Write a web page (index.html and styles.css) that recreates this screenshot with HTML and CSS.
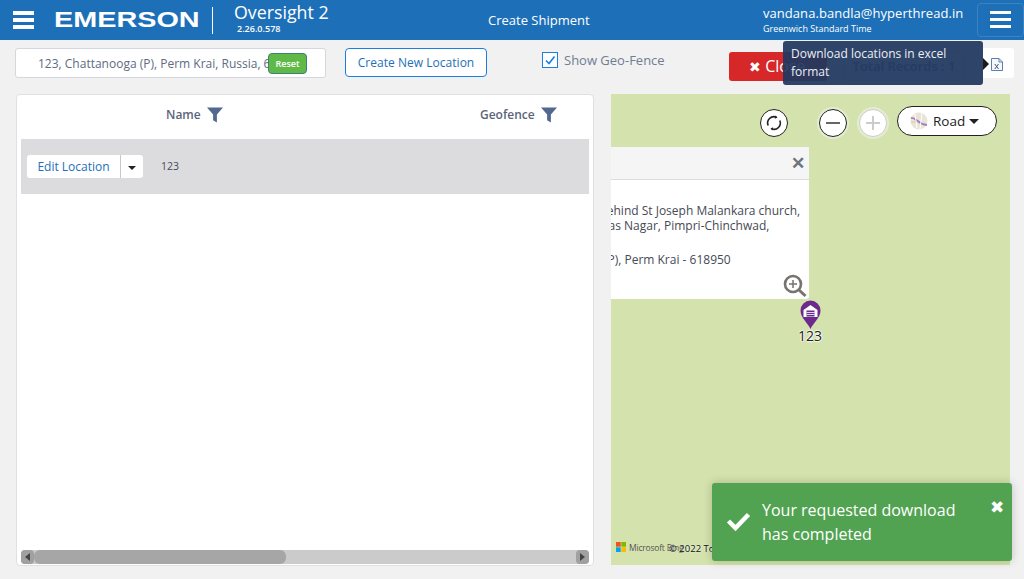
FILE: index.html
```html
<!DOCTYPE html>
<html lang="en">
<head>
<meta charset="utf-8">
<title>Oversight 2</title>
<link rel="stylesheet" href="styles.css">
</head>
<body>
<header class="topbar">
  <div class="burger burger-main"><span></span><span></span><span></span></div>
  <div class="logo"><span class="logo-word">EMERSON</span></div>
  <div class="brand">
    <div class="brand-name">Oversight 2</div>
    <div class="brand-version">2.26.0.578</div>
  </div>
  <div class="nav-link">Create Shipment</div>
  <div class="user">
    <div class="user-mail">vandana.bandla@hyperthread.in</div>
    <div class="user-zone">Greenwich Standard Time</div>
  </div>
  <div class="menu-btn"><div class="burger"><span></span><span></span><span></span></div></div>
</header>

<section class="toolbar">
  <div class="search">
    <span class="search-text">123, Chattanooga (P), Perm Krai, Russia, 618950</span>
    <span class="reset">Reset</span>
  </div>
  <div class="create-btn">Create New Location</div>
  <label class="geo">
    <span class="checkbox"><svg width="12" height="12" viewBox="0 0 12 12"><path d="M2 6.500l3 3 5.500-7" fill="none" stroke="#1a7fe0" stroke-width="1.600"/></svg></span>
    Show Geo-Fence
  </label>
  <div class="close-btn"><span class="close-x">✖</span> Close</div>
  <div class="records">Total Records : 1</div>
  <div class="xls">
    <svg width="12" height="13" viewBox="0 0 12 13"><path d="M.5.500h7.500l3.500 3.500v8.500h-11z M8 .500v3.500h3.500" fill="#f4f8fc" stroke="#5b7fae"/><path d="M3.800 6l3.700 5M7.500 6l-3.700 5" stroke="#44597a" stroke-width="1"/></svg>
  </div>
  <div class="tooltip">Download locations in excel format</div>
</section>

<main class="content">
  <section class="panel">
    <div class="thead">
      <div class="th th-name">Name
        <svg class="funnel" width="16" height="16" viewBox="0 0 17 16"><path d="M0 0h17l-6.500 7.500v8.500l-4-2.500v-6z" fill="#53688f"/></svg>
      </div>
      <div class="th th-geo">Geofence
        <svg class="funnel" width="16" height="16" viewBox="0 0 17 16"><path d="M0 0h17l-6.500 7.500v8.500l-4-2.500v-6z" fill="#53688f"/></svg>
      </div>
    </div>
    <div class="row">
      <div class="split">
        <span class="split-main">Edit Location</span>
        <span class="split-caret"><i class="caret"></i></span>
      </div>
      <div class="cell">123</div>
    </div>
    <div class="panel-fill"></div>
    <div class="scrollbar">
      <span class="sb-btn"><i class="arrow-l"></i></span>
      <div class="sb-track"><div class="sb-thumb"></div></div>
      <span class="sb-btn"><i class="arrow-r"></i></span>
    </div>
  </section>

  <section class="map">
    <div class="round-btn refresh">
      <svg width="20" height="20" viewBox="0 0 20 20" fill="none" stroke="#222" stroke-width="1.600"><path d="M4.200 12.500A6.300 6.300 0 0 1 12.500 4.200"/><path d="M15.800 7.500A6.300 6.300 0 0 1 7.500 15.800"/><path d="M11.300 2.400l2.200 2.100-2.700 1.200z" fill="#222" stroke="none"/><path d="M8.700 17.600l-2.200-2.100 2.700-1.200z" fill="#222" stroke="none"/></svg>
    </div>
    <div class="round-btn zoom-out"><i class="minus"></i></div>
    <div class="round-btn zoom-in"><i class="plus"></i></div>
    <div class="road">
      <svg width="18" height="18" viewBox="0 0 18 18"><circle cx="9" cy="9" r="8.500" fill="#e8e4d8"/><path d="M1 6c5-1 6 6 16 7" fill="none" stroke="#a77fc0" stroke-width="1.800"/><path d="M5 2l2 14M12 1l-2 16" stroke="#fff" stroke-width="1"/><path d="M1 10h5" stroke="#e2c98f"/></svg>
      <span>Road</span><i class="caret caret-big"></i>
    </div>
    <div class="popup">
      <div class="popup-head"><span class="popup-x">✕</span></div>
      <div class="popup-body">
        <p class="line-one">Behind St Joseph Malankara church,</p>
        <p class="line-two">Vikas Nagar, Pimpri-Chinchwad,</p>
        <p class="line-three">Chattanooga (P), Perm Krai - 618950</p>
      </div>
      <svg class="popup-zoom" width="24" height="24" viewBox="0 0 24 24" fill="none" stroke="#77736d"><circle cx="10" cy="10" r="8" stroke-width="2.600"/><path d="M15.500 15.500l7 6.500" stroke-width="3"/><path d="M10 6v8M6 10h8" stroke-width="1.500"/></svg>
    </div>
    <div class="pin">
      <svg width="21" height="30" viewBox="0 0 21 30"><path d="M10.500 29C8 23 .5 18 .5 10.500a10 10 0 0 1 20 0C20.500 18 13 23 10.500 29z" fill="#6b2a8c"/><path d="M3.500 10l7-5 7 5v7h-14z" fill="#fff"/><path d="M6.500 10.500h8v6h-8z" fill="#6b2a8c"/><path d="M6.500 12.500h8M6.500 14.500h8" stroke="#fff" stroke-width=".8"/></svg>
      <span class="pin-label">123</span>
    </div>
    <div class="attrib">
      <svg width="10" height="10" viewBox="0 0 10 10"><rect width="4.700" height="4.700" fill="#f25022"/><rect x="5.300" width="4.700" height="4.700" fill="#7fba00"/><rect y="5.300" width="4.700" height="4.700" fill="#00a4ef"/><rect x="5.300" y="5.300" width="4.700" height="4.700" fill="#ffb900"/></svg>
      <span class="bing">Microsoft Bing</span>
      <span class="copy">© 2022 TomTom</span>
    </div>
  </section>
</main>

<aside class="toast">
  <svg class="toast-check" width="25" height="20" viewBox="0 0 25 20"><path d="M2.500 10l7 7L22.500 3.500" fill="none" stroke="#fff" stroke-width="4.500"/></svg>
  <div class="toast-text">Your requested download has completed</div>
  <span class="toast-x">✖</span>
</aside>
</body>
</html>
```

FILE: styles.css
```css
* { box-sizing: border-box; }
html, body { margin: 0; height: 100%; }
body {
  position: relative;
  width: 1024px;
  height: 579px;
  overflow: hidden;
  display: flex;
  flex-direction: column;
  background: #f1f1f1;
  font-family: "Open Sans", "Liberation Sans", sans-serif;
  color: #333;
}

/* top bar */
.topbar {
  flex: 0 0 40px;
  display: flex;
  align-items: center;
  background: #1d70b8;
  color: #fff;
  padding-left: 13px;
}
.burger { display: flex; flex-direction: column; gap: 3.500px; width: 21px; flex: none; }
.burger span { display: block; height: 3.500px; background: #fff; }
.logo {
  flex: none;
  margin-left: 20px;
  width: 158px;
  height: 20px;
  font-family: "Liberation Sans", Arial, sans-serif;
  font-weight: 700;
  font-size: 22.500px;
  line-height: 20px;
  white-space: nowrap;
}
.logo-word { display: inline-block; transform: scaleX(1.28); transform-origin: left center; }
.brand {
  flex: none;
  height: 27px;
  padding-left: 21px;
  border-left: 1px solid #fff;
  width: 276px;
}
.brand-name { font-size: 17.800px; line-height: 17px; margin-top: -3px; white-space: nowrap; }
.brand-version { font-size: 9px; line-height: 11px; margin: 2px 0 0 3px; font-weight: 600; }
.nav-link { flex: none; font-size: 13px; width: 275px; margin-top: -1px; }
.user { flex: none; width: 214px; margin-top: -1px; }
.user-mail { font-size: 13px; line-height: 16px; white-space: nowrap; letter-spacing: .05px; }
.user-zone { font-size: 9px; line-height: 12px; margin-top: 2px; font-weight: 400; white-space: nowrap; }
.menu-btn {
  flex: none;
  width: 47px;
  height: 34px;
  margin-top: -1px;
  display: flex;
  align-items: center;
  justify-content: center;
  border: 1px solid #3b83c2;
  border-radius: 4px;
}

/* toolbar */
.toolbar {
  flex: 0 0 54px;
  position: relative;
  display: flex;
  align-items: flex-start;
  padding: 8px 0 0 15px;
}
.toolbar > * { flex: none; }
.search {
  width: 311px;
  height: 30px;
  background: #fff;
  border: 1px solid #d4d7dd;
  border-radius: 3px;
  display: flex;
  align-items: center;
  padding-left: 22px;
  position: relative;
  font-size: 12px;
  color: #5e6b80;
  overflow: hidden;
}
.search-text { white-space: nowrap; }
.reset {
  position: absolute;
  left: 252px;
  top: 4px;
  width: 39px;
  height: 21px;
  background: #5fb946;
  border: 1px solid #3f7f78;
  border-radius: 4px;
  color: #fff;
  font-size: 9px;
  font-weight: 600;
  text-align: center;
  line-height: 19px;
}
.create-btn {
  margin-left: 19px;
  width: 142px;
  height: 29px;
  background: #fff;
  border: 1px solid #1a7fe0;
  border-radius: 4px;
  color: #1d70b8;
  font-size: 12px;
  letter-spacing: .03px;
  text-align: center;
  line-height: 27px;
}
.geo {
  margin-left: 55px;
  width: 187px;
  height: 26px;
  display: flex;
  align-items: center;
  gap: 6px;
  font-size: 13px;
  color: #6f7d93;
  margin-top: -1px;
}
.checkbox {
  width: 16px;
  height: 16px;
  background: #fff;
  border: 1.500px solid #1a7fe0;
  display: flex;
  align-items: center;
  justify-content: center;
}
.close-btn {
  width: 98px;
  height: 29px;
  margin-top: 4px;
  background: #d62828;
  border-radius: 3px;
  color: #fff;
  font-size: 16px;
  line-height: 28px;
  padding-left: 20px;
  white-space: nowrap;
}
.close-x { font-size: 14px; }
.records {
  width: 120px;
  height: 29px;
  margin: 4px 0 0 17px;
  border: 1px solid #d4d7dd;
  border-radius: 3px;
  font-size: 13px;
  font-weight: 600;
  color: #53688f;
  text-align: center;
  line-height: 27px;
  white-space: nowrap;
}
.xls {
  width: 35px;
  height: 30px;
  margin-left: 15px;
  background: #fff;
  border-radius: 3px;
  display: flex;
  align-items: center;
  justify-content: center;
  padding-top: 3px;
}
.tooltip {
  position: absolute;
  left: 783px;
  top: 1px;
  width: 200px;
  height: 44px;
  padding: 4px 8px;
  background: rgba(34, 56, 96, .94);
  border-radius: 3px;
  color: #eceff4;
  font-size: 12px;
  line-height: 18px;
}
.tooltip::after {
  content: "";
  position: absolute;
  right: -6px;
  top: 17px;
  border-left: 6px solid #1b1b1b;
  border-top: 6px solid transparent;
  border-bottom: 6px solid transparent;
}

/* content */
.content {
  flex: 1;
  display: flex;
  align-items: flex-start;
  padding-left: 16px;
  gap: 17px;
}
.panel {
  flex: none;
  width: 578px;
  height: 472px;
  display: flex;
  flex-direction: column;
  padding: 0 4px;
  background: #fff;
  border: 1px solid #dde0e6;
  border-radius: 4px;
}
.thead { flex: 0 0 44px; display: flex; align-items: center; padding-bottom: 6px; }
.th {
  display: flex;
  align-items: center;
  gap: 6px;
  font-size: 12px;
  font-weight: 600;
  color: #5a6579;
  white-space: nowrap;
}
.th-name { margin-left: 145px; width: 314px; }
.funnel { margin-top: 2px; }
.row {
  flex: 0 0 55px;
  display: flex;
  align-items: center;
  padding-left: 6px;
  background: #dcdcde;
}
.split {
  display: flex;
  width: 116px;
  height: 23px;
  background: #fff;
  border-radius: 3px;
  font-size: 12px;
  color: #1d70b8;
  line-height: 23px;
}
.split-main { width: 94px; text-align: center; border-right: 1px solid #c8c8c8; white-space: nowrap; }
.split-caret { flex: 1; display: flex; align-items: center; justify-content: center; padding-top: 2px; }
.caret {
  display: block;
  border-top: 4px solid #222;
  border-left: 4px solid transparent;
  border-right: 4px solid transparent;
}
.cell { margin-left: 18px; font-size: 10.500px; color: #444c5c; margin-top: -2px; }
.panel-fill { flex: 1; }
.scrollbar {
  flex: 0 0 14px;
  display: flex;
  margin-bottom: 1px;
  background: #cbcbcb;
  border-radius: 4px;
}
.sb-btn {
  flex: 0 0 13px;
  background: #a0a0a0;
  border-radius: 4px;
  display: flex;
  align-items: center;
  justify-content: center;
}
.arrow-l, .arrow-r { display: block; border-top: 4px solid transparent; border-bottom: 4px solid transparent; }
.arrow-l { border-right: 5px solid #444; }
.arrow-r { border-left: 5px solid #444; }
.sb-track { flex: 1; }
.sb-thumb { width: 252px; height: 100%; background: #a6a6a6; border-radius: 6px; }

/* map */
.map {
  flex: none;
  position: relative;
  width: 399px;
  height: 471px;
  background: #d4e2ad;
  overflow: hidden;
}
.round-btn {
  position: absolute;
  top: 15px;
  width: 28px;
  height: 28px;
  background: #fff;
  border: 1px solid #222;
  border-radius: 50%;
  display: flex;
  align-items: center;
  justify-content: center;
}
.refresh { left: 149px; }
.zoom-out { left: 208px; box-shadow: 0 0 0 2px #e4ecd0; }
.zoom-in { left: 248px; border-color: #ccc; box-shadow: 0 0 0 2px #e4ecd0; }
.minus, .plus { display: block; position: relative; width: 14px; height: 2px; background: #666; }
.plus { background: #ccc; }
.plus::after {
  content: "";
  position: absolute;
  left: 6px;
  top: -6px;
  width: 2px;
  height: 14px;
  background: #ccc;
}
.road {
  position: absolute;
  left: 286px;
  top: 12px;
  width: 100px;
  height: 30px;
  background: #fff;
  border: 1px solid #222;
  border-radius: 15px;
  display: flex;
  align-items: center;
  padding-left: 12px;
  font-size: 13.500px;
  color: #222;
}
.road span { margin-left: 5px; }
.caret-big { margin: 0 0 0 4px; border-top-width: 5px; border-left-width: 5px; border-right-width: 5px; }
.popup {
  position: absolute;
  left: 0;
  top: 53px;
  width: 198px;
  height: 152px;
  background: #fff;
  border-radius: 0 3px 3px 0;
}
.popup-head {
  height: 33px;
  background: #f5f5f5;
  border-bottom: 1px solid #dcdcdc;
  display: flex;
  align-items: center;
  justify-content: flex-end;
  padding-right: 4px;
}
.popup-x { font-size: 17px; font-weight: 700; line-height: 20px; color: #6c757d; }
.popup-body {
  padding-top: 23px;
  margin-left: -14px;
  white-space: nowrap;
  font-size: 12px;
  line-height: 15px;
  color: #444a55;
  width: 212px;
}
.popup-body p { margin: 0; }
.popup-body .line-one { margin-left: 2px; }
.popup-body .line-two { margin-left: -5px; }
.popup-body .line-three { margin: 19px 0 0 -68px; }
.popup-zoom { position: absolute; right: 2px; bottom: 1px; }
.pin { position: absolute; left: 188px; top: 206px; width: 22px; display: flex; flex-direction: column; align-items: center; }
.pin-label {
  font-size: 14px;
  line-height: 14px;
  margin-top: -1px;
  color: #222;
  text-shadow: 0 0 2px #fff, 0 0 2px #fff, 0 0 2px #fff, 0 0 2px #fff;
}
.attrib {
  position: absolute;
  left: 5px;
  bottom: 11px;
  height: 14px;
  width: 130px;
  display: flex;
  align-items: center;
  gap: 3px;
  white-space: nowrap;
  overflow: hidden;
}
.bing { font-size: 8.500px; color: #555; letter-spacing: -.2px; }
.copy { position: absolute; left: 53px; top: 3px; font-size: 9.500px; line-height: 12px; color: #111; text-shadow: 0 0 2px #fff; }

/* toast */
.toast {
  position: absolute;
  left: 712px;
  top: 483px;
  width: 300px;
  height: 78px;
  display: flex;
  align-items: flex-start;
  background: #51a351;
  border-radius: 3px;
  box-shadow: 0 0 10px rgba(0, 0, 0, .2);
  color: #fff;
}
.toast-check { margin: 28px 0 0 14px; flex: none; }
.toast-text { width: 210px; margin: 15px 0 0 11px; font-size: 16px; line-height: 24px; }
.toast-x { position: absolute; right: 8px; top: 15px; font-size: 17px; line-height: 18px; }
```
